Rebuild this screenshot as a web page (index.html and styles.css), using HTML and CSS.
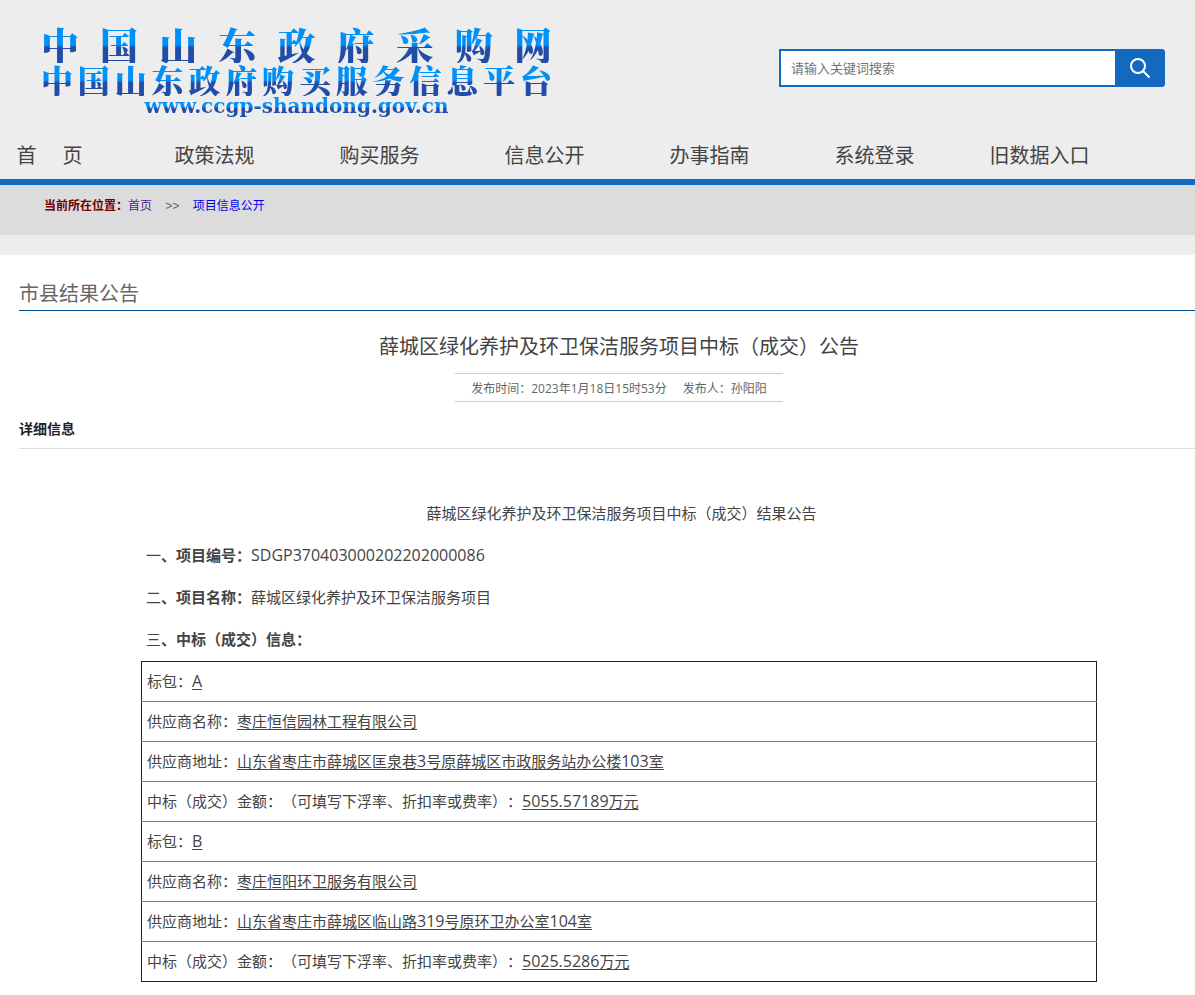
FILE: index.html
```html
<!DOCTYPE html>
<html lang="zh-CN">
<head>
  <meta charset="UTF-8" />
  <title>中国山东政府采购网</title>
  <link rel="stylesheet" href="styles.css">
</head>
<body>

  <header class="header">
    <div class="header-top">
      <div class="logo">
        <div class="logo-name">中国山东政府采购网</div>
        <div class="logo-sub">中国山东政府购买服务信息平台</div>
        <div class="logo-url">www.ccgp-shandong.gov.cn</div>
      </div>
      <form class="search" id="searchForm">
        <input type="text" id="keyword" placeholder="请输入关键词搜索" aria-label="请输入关键词搜索" />
        <button type="submit" aria-label="搜索">
          <svg width="22" height="22" viewBox="0 0 22 22" fill="none" stroke="#fff" stroke-width="2">
            <circle cx="9" cy="9" r="7" />
            <path d="M14 14l6.500 6.500" />
          </svg>
        </button>
      </form>
    </div>
    <nav class="nav">
      <a href="#">首&nbsp;&nbsp;&nbsp;&nbsp;&nbsp;页</a>
      <a href="#">政策法规</a>
      <a href="#">购买服务</a>
      <a href="#">信息公开</a>
      <a href="#">办事指南</a>
      <a href="#">系统登录</a>
      <a href="#">旧数据入口</a>
    </nav>
  </header>

  <div class="position">
    <strong>当前所在位置：</strong><a href="#" class="visited">首页</a>
    <span class="arrow">&gt;&gt;</span>
    <a href="#">项目信息公开</a>
  </div>

  <main class="main">
    <h2 class="section-title">市县结果公告</h2>

    <div class="title-box">
      <h1>薛城区绿化养护及环卫保洁服务项目中标（成交）公告</h1>
      <div class="meta">
        <span>发布时间：2023年1月18日15时53分</span>
        <span>发布人：孙阳阳</span>
      </div>
    </div>

    <h3 class="detail-title">详细信息</h3>

    <div class="article">
      <p class="article-title">薛城区绿化养护及环卫保洁服务项目中标（成交）结果公告</p>
      <p>一<strong>、项目编号：</strong><span class="num">SDGP370403000202202000086</span></p>
      <p>二<strong>、项目名称：</strong>薛城区绿化养护及环卫保洁服务项目</p>
      <p>三<strong>、中标（成交）信息：</strong></p>
      <table>
        <tr><td>标包：<u><span class="num">A</span></u></td></tr>
        <tr><td>供应商名称：<u>枣庄恒信园林工程有限公司</u></td></tr>
        <tr><td>供应商地址：<u>山东省枣庄市薛城区匡泉巷<span class="num">3</span>号原薛城区市政服务站办公楼<span class="num">103</span>室</u></td></tr>
        <tr><td>中标（成交）金额：（可填写下浮率、折扣率或费率）：<u><span class="num">5055.57189</span>万元</u></td></tr>
        <tr><td>标包：<u><span class="num">B</span></u></td></tr>
        <tr><td>供应商名称：<u>枣庄恒阳环卫服务有限公司</u></td></tr>
        <tr><td>供应商地址：<u>山东省枣庄市薛城区临山路<span class="num">319</span>号原环卫办公室<span class="num">104</span>室</u></td></tr>
        <tr><td>中标（成交）金额：（可填写下浮率、折扣率或费率）：<u><span class="num">5025.5286</span>万元</u></td></tr>
      </table>
    </div>
  </main>

</body>
</html>
```
FILE: styles.css
```css
* {
  box-sizing: border-box;
}
body {
  margin: 0;
  font-family: "Open Sans", "Noto Sans CJK SC", sans-serif;
  font-size: 12px;
  color: #444;
  background: #fff;
  text-spacing-trim: space-all;
}
h1, h2, h3, p {
  margin: 0;
  font-weight: normal;
}
a {
  text-decoration: none;
}

/* header */
.header {
  background: #ededed;
  border-bottom: 6px solid #1369c0;
}
.header-top {
  display: flex;
  justify-content: space-between;
  align-items: center;
  height: 136px;
  padding: 0 30px 0 41px;
}
.logo {
  width: 511px;
  padding-top: 6px;
  font-family: "Noto Serif CJK SC", "Noto Sans CJK SC", serif;
  font-weight: 900;
}
.logo div {
  color: transparent;
  background: linear-gradient(#0090f8 52%, #214ca8 60%);
  -webkit-background-clip: text;
  background-clip: text;
  text-align: justify;
  text-align-last: justify;
}
.logo-name {
  font-size: 38px;
  line-height: 38px;
}
.logo .logo-sub {
  font-size: 32px;
  line-height: 33px;
}
.logo .logo-url {
  font-family: "DejaVu Serif", serif;
  font-size: 20px;
  line-height: 24px;
  margin-top: -2px;
  text-align: center;
  text-align-last: center;
}
.search {
  display: flex;
  width: 386px;
  height: 38px;
}
.search input {
  flex: 1;
  min-width: 0;
  padding: 0 10px;
  border: 2px solid #1369c0;
  border-right: none;
  border-radius: 0;
  font-family: inherit;
  font-size: 13px;
  outline: none;
}
.search input::placeholder {
  color: #757575;
}
.search button {
  display: flex;
  justify-content: center;
  align-items: center;
  width: 50px;
  padding: 0;
  border: none;
  border-radius: 0 3px 3px 0;
  background: #1369c0;
  cursor: pointer;
}
.nav {
  display: grid;
  grid-template-columns: repeat(7, 165px);
  margin-left: -33px;
  padding-bottom: 3px;
}
.nav a {
  font-size: 20px;
  line-height: 40px;
  text-align: center;
  color: #444;
}

/* breadcrumb */
.position {
  height: 70px;
  padding-left: 44px;
  line-height: 42px;
  background: #dcdcdc;
  border-bottom: 20px solid #ededed;
}
.position strong {
  color: #700000;
}
.position a {
  color: #0000ee;
}
.position .visited {
  color: #551a8b;
}
.position .arrow {
  margin: 0 10px;
  font-family: "Liberation Mono", monospace;
  color: #666;
}

/* content */
.main {
  padding-left: 19px;
}
.section-title {
  padding-top: 22px;
  font-size: 20px;
  line-height: 33px;
  color: #666;
  border-bottom: 1px solid #004f8f;
}
.title-box {
  padding: 16px 0 0 24px;
  text-align: center;
}
.title-box h1 {
  font-size: 20px;
  line-height: 40px;
}
.meta {
  display: inline-flex;
  gap: 16px;
  margin-top: 6px;
  padding: 2px 16px 0;
  line-height: 25px;
  color: #666;
  border-top: 1px solid #ccc;
  border-bottom: 1px solid #ccc;
}
.detail-title {
  margin-top: 8px;
  font-size: 14px;
  font-weight: bold;
  line-height: 38px;
  color: #222;
  border-bottom: 1px solid #ddd;
}
.article {
  padding: 43px 98px 13px 122px;
  font-size: 15px;
}
.article p {
  padding-left: 5px;
  line-height: 42px;
}
.article .article-title {
  text-align: center;
}
.article table {
  width: 100%;
  margin-top: 1px;
  border-collapse: collapse;
  border: 1px solid #222;
}
.article td {
  height: 40px;
  padding: 0 5px 2px;
  line-height: 24px;
  border-bottom: 1px solid #777;
}
.article tr:last-child td {
  border-bottom-color: #222;
}
.article u {
  text-decoration-thickness: 1px;
  text-underline-offset: 2px;
}
.num {
  font-size: 16px;
}
```
